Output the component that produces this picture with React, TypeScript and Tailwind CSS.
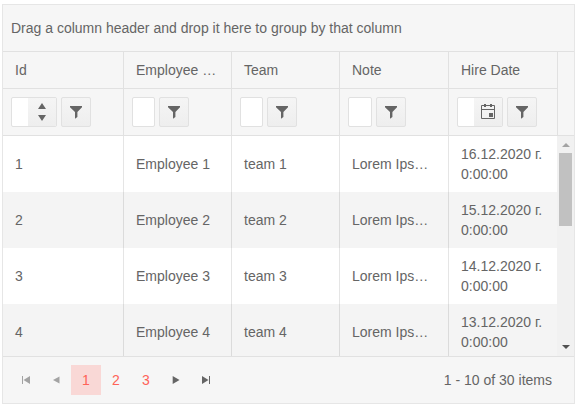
import React from 'react';

const columns = ['Id', 'Employee Name', 'Team', 'Note', 'Hire Date'];

const rows = [
  { id: 1, date: '16.12.2020 г.' },
  { id: 2, date: '15.12.2020 г.' },
  { id: 3, date: '14.12.2020 г.' },
  { id: 4, date: '13.12.2020 г.' },
];

const gridCols = 'grid grid-cols-[120px_108px_108px_109px_109px]';

function FilterButton() {
  return (
    <button className="flex size-[30px] shrink-0 items-center justify-center rounded-[2px] border border-[#e1e1e1] bg-linear-to-b from-[#f5f5f5] to-[#eeeeee]">
      <svg width="12" height="14" viewBox="0 0 12 14" fill="#656565">
        <path d="M0 1h12v1.2L7.4 7V12L5 13.8V7L0 2.2z" />
      </svg>
    </button>
  );
}

function FilterCell({ kind, width, first }: { kind: 'number' | 'text' | 'date'; width: string; first?: boolean }) {
  return (
    <div className={`flex gap-1 py-2 pl-2 ${first ? '' : 'border-l border-[#e1e1e1]'}`}>
      <div className={`flex h-[30px] ${width} shrink-0 overflow-hidden rounded-[2px] border border-[#e1e1e1] bg-white`}>
        {kind === 'number' && (
          <div className="ml-4 flex w-7 items-center justify-center bg-linear-to-b from-[#f5f5f5] to-[#eeeeee]">
            <svg width="8" height="20" viewBox="0 0 8 20" fill="#656565">
              <path d="M4 1l4 6H0zM0 13h8l-4 6z" />
            </svg>
          </div>
        )}
        {kind === 'date' && (
          <div className="ml-4 flex w-7 items-center justify-center bg-linear-to-b from-[#f5f5f5] to-[#eeeeee]">
            <svg width="14" height="16" viewBox="0 0 14 16" fill="none" stroke="#656565">
              <path d="M.5 1.5h13v13H.5zM1 5.5h12" />
              <path d="M3 1.5h2M9 1.5h2" strokeWidth="3" />
              <path d="M8 9h4v4H8z" fill="#656565" stroke="none" />
            </svg>
          </div>
        )}
      </div>
      <FilterButton />
    </div>
  );
}

function PagerArrow({ d, muted }: { d: string; muted?: boolean }) {
  return (
    <button className={`flex size-[30px] items-center justify-center ${muted ? 'text-[#a3a3a3]' : 'text-[#656565]'}`}>
      <svg width="8" height="8" viewBox="0 0 8 8" fill="currentColor">
        <path d={d} />
      </svg>
    </button>
  );
}

export default function App() {
  return (
    <div className="h-[408px] w-[578px] bg-white pt-1 pl-0.5 font-['Liberation_Sans',Arial,sans-serif] text-[14px] leading-5 text-[#656565]">
      <div className="flex h-[400px] w-[573px] flex-col border border-[#e6e6e6] bg-[#f6f6f6]">
        <div className="flex h-[47px] shrink-0 items-center border-b border-[#e1e1e1] pl-2">
          Drag a column header and drop it here to group by that column
        </div>

        <div className="flex h-[84px] shrink-0 border-b border-[#e1e1e1]">
          <div>
            <div className={`${gridCols} h-[37px] border-b border-[#e1e1e1]`}>
              {columns.map((name, i) => (
                <div key={name} className={`truncate px-3 pt-2 ${i ? 'border-l border-[#e1e1e1]' : ''}`}>
                  {name}
                </div>
              ))}
            </div>
            <div className={`${gridCols} h-[46px]`}>
              <FilterCell kind="number" width="w-[46px]" first />
              <FilterCell kind="text" width="w-[23px]" />
              <FilterCell kind="text" width="w-[23px]" />
              <FilterCell kind="text" width="w-[24px]" />
              <FilterCell kind="date" width="w-[46px]" />
            </div>
          </div>
          <div className="flex-1 border-l border-[#e1e1e1]" />
        </div>

        <div className="flex h-[221px] shrink-0 overflow-hidden border-b border-[#e1e1e1]">
          <div>
            {rows.map((row, i) => (
              <div key={row.id} className={`${gridCols} h-14 items-stretch ${i % 2 ? 'bg-[#f4f4f4]' : 'bg-white'}`}>
                <div className="px-3 pt-[18px]">{row.id}</div>
                <div className="truncate border-l border-black/10 px-3 pt-[18px]">Employee {row.id}</div>
                <div className="truncate border-l border-black/10 px-3 pt-[18px]">team {row.id}</div>
                <div className="truncate border-l border-black/10 px-3 pt-[18px]">Lorem Ipsum dolor</div>
                <div className="border-l border-black/10 pt-2 pl-3">
                  {row.date}
                  <br />
                  0:00:00
                </div>
              </div>
            ))}
          </div>
          <div className="flex w-[17px] flex-col items-center bg-[#f1f1f1]">
            <div className="flex h-[17px] items-center justify-center">
              <svg width="8" height="4" viewBox="0 0 8 4" fill="#a3a3a3">
                <path d="M4 0l4 4H0z" />
              </svg>
            </div>
            <div className="h-[73px] w-[13px] bg-[#c1c1c1]" />
            <div className="mt-auto flex h-[18px] items-center justify-center">
              <svg width="8" height="4" viewBox="0 0 8 4" fill="#505050">
                <path d="M0 0h8L4 4z" />
              </svg>
            </div>
          </div>
        </div>

        <div className="flex h-[46px] items-center pr-[22px] pl-2">
          <PagerArrow muted d="M0 0h1v8H0zM8 0v8L1.5 4z" />
          <PagerArrow muted d="M7.5 .5v7L1 4z" />
          <button className="size-[30px] bg-[#f9d8d6] text-[#ff6358]">1</button>
          <button className="size-[30px] text-[#ff6358]">2</button>
          <button className="size-[30px] text-[#ff6358]">3</button>
          <PagerArrow d="M.7 0v8l6.8-4z" />
          <PagerArrow d="M7 0h1v8H7zM0 0v8l6.5-4z" />
          <span className="ml-auto">1 - 10 of 30 items</span>
        </div>
      </div>
    </div>
  );
}
